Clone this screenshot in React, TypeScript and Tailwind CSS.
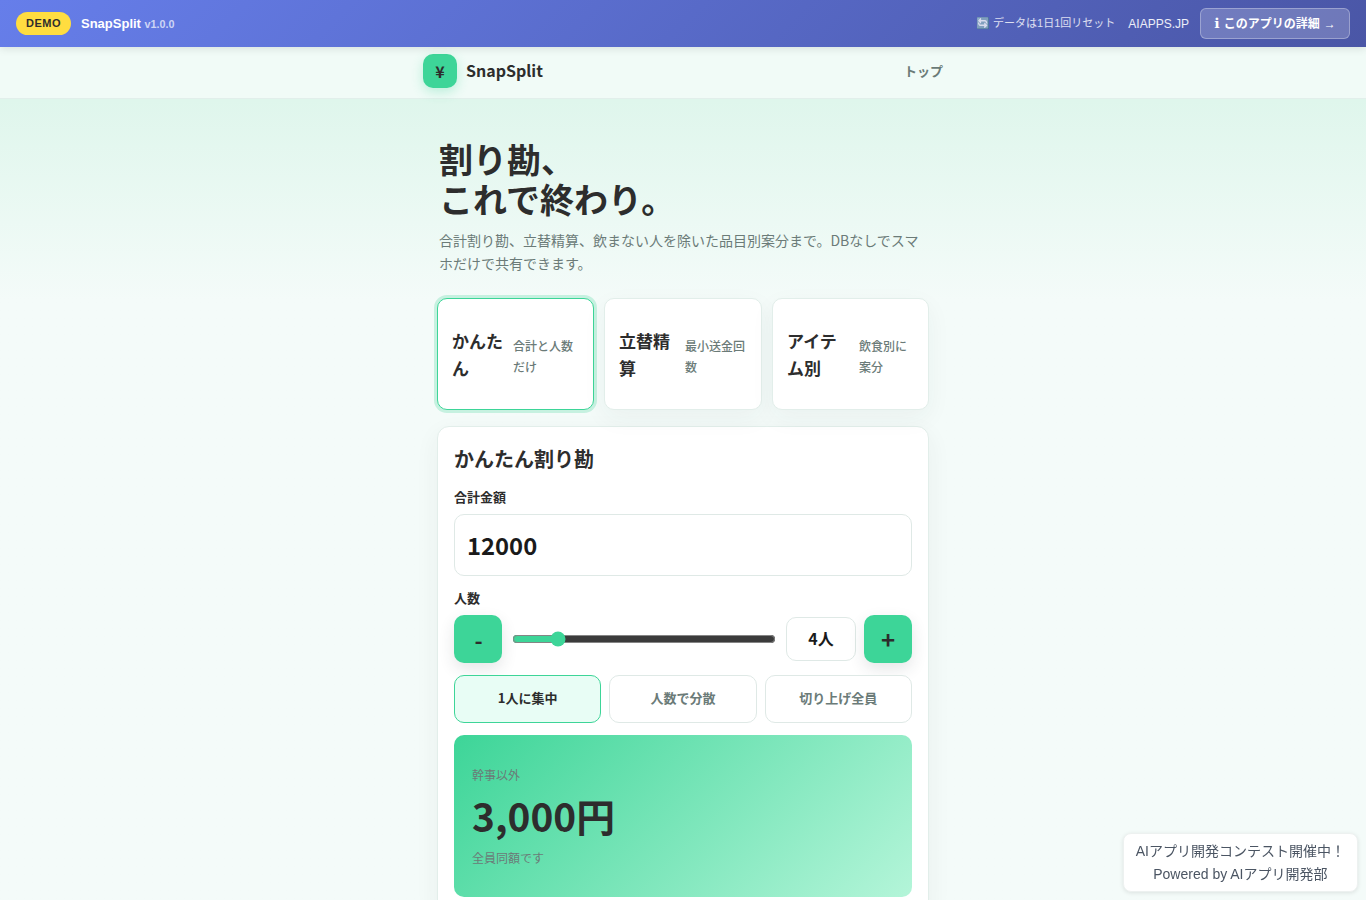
import React from "react";

const jp = "font-['Noto_Sans_CJK_JP','Noto_Sans',sans-serif]";

function Mode({ title, sub, active, titleW, subW }: { title: string; sub: string; active?: boolean; titleW: string; subW: string }) {
  return (
    <button
      className={`flex h-[112px] flex-1 items-center gap-[10px] rounded-[10px] border bg-white px-[14px] text-left ${
        active
          ? "border-[#3dd598] shadow-[0_0_0_3px_rgba(61,213,152,0.25)]"
          : "border-[#e2eeea] shadow-[0_8px_24px_rgba(45,52,54,0.05)]"
      }`}
    >
      <span className={`${titleW} shrink-0 text-[17px] leading-[27px] font-bold text-[#2d2d2d]`}>{title}</span>
      <span className={`${subW} mt-[4px] text-[12px] leading-[21px] font-medium text-[#6b7b78]`}>{sub}</span>
    </button>
  );
}

function Chip({ label, active }: { label: string; active?: boolean }) {
  return (
    <button
      className={`h-[48px] flex-1 rounded-[10px] border pb-[2px] text-[13px] font-bold ${
        active ? "border-[#3dd598] bg-[#e8fdf5] text-[#2d2d2d]" : "border-[#dfe9e6] bg-white text-[#6b7b78]"
      }`}
    >
      {label}
    </button>
  );
}

export default function App() {
  return (
    <div className={`min-h-screen bg-gradient-to-b from-[#dff6ec] from-[100px] via-[#f4fbf9] via-[300px] to-[#f4fbf9] ${jp}`}>
      <header className="relative z-10 flex h-[47px] items-center justify-between bg-[linear-gradient(135deg,#667eea_0%,#4a56a6_100%)] pr-4 pl-4 font-['Liberation_Sans','Noto_Sans_CJK_JP',sans-serif] shadow-[0_2px_8px_rgba(0,0,0,0.1)]">
        <div className="flex items-center gap-[10px]">
          <span className="flex h-[23px] w-[55px] items-center justify-center rounded-full bg-[#ffdd40] text-[11px] font-bold tracking-[0.5px] text-[#2d2d2d]">DEMO</span>
          <span className="text-[13px] font-bold text-white">
            SnapSplit <span className="text-[10.8px] font-bold text-white/70">v1.0.0</span>
          </span>
        </div>
        <div className="flex items-center">
          <span className="text-[11px] text-white/80">🔄 データは1日1回リセット</span>
          <span className="ml-[13px] text-[12px] text-white/90">AIAPPS.JP</span>
          <button className="ml-[11px] flex h-[31px] w-[150px] items-center justify-center rounded-[6px] border border-white/30 bg-white/20 text-[12px] font-bold text-white">
            <span className="font-['DejaVu_Sans',sans-serif] text-[14px]">ℹ</span>
            <span className="ml-[4px]">このアプリの詳細</span>
            <span className="ml-[4px] font-normal">→</span>
          </button>
        </div>
      </header>

      <nav className="h-[52px] border-b border-[#e2efeb] bg-[#f1fbf7]">
        <div className="mx-auto flex h-[47px] w-[520px] items-center justify-between">
          <div className="flex items-center gap-[9px]">
            <span className="flex h-[34px] w-[34px] items-center justify-center rounded-[10px] bg-[#3dd598] text-[16px] font-bold text-[#2d2d2d] shadow-[0_4px_12px_rgba(61,213,152,0.3)]">¥</span>
            <span className="pb-[2px] text-[16px] font-bold text-[#2d2d2d]">SnapSplit</span>
          </div>
          <span className="text-[13px] font-bold text-[#6b7b78]">トップ</span>
        </div>
      </nav>

      <main className="mx-auto w-[492px] pt-[40px]">
        <section className="px-[2px]">
          <h1 className="text-[34px] leading-[40px] font-bold text-[#2d2d2d]">割り勘、<br />これで終わり。</h1>
          <p className="mt-[10px] text-[14px] leading-[23px] text-[#6b7b78]">合計割り勘、立替精算、飲まない人を除いた品目別案分まで。DBなしでスマホだけで共有できます。</p>
        </section>

        <div className="mt-[23px] flex gap-[10px]">
          <Mode title="かんたん" sub="合計と人数だけ" active titleW="w-[51px]" subW="w-[64px]" />
          <Mode title="立替精算" sub="最小送金回数" titleW="w-[56px]" subW="w-[62px]" />
          <Mode title="アイテム別" sub="飲食別に案分" titleW="w-[62px]" subW="w-[50px]" />
        </div>

        <section className="mt-[16px] rounded-[12px] border border-[#e2eeea] bg-white px-4 pt-[16px] pb-4 shadow-[0_8px_24px_rgba(45,52,54,0.06)]">
          <h2 className="text-[20px] leading-[32px] font-bold text-[#2d2d2d]">かんたん割り勘</h2>
          <label className="mt-[14px] block text-[13px] leading-[16px] font-bold text-[#2d2d2d]">合計金額</label>
          <input
            readOnly
            value="12000"
            className="mt-[9px] block h-[62px] w-full rounded-[10px] border border-[#dfe9e6] bg-white px-[12px] pb-[2px] text-[23.8px] font-bold text-[#1a1a1a] outline-none"
          />
          <label className="mt-[14px] block text-[13px] leading-[16px] font-bold text-[#2d2d2d]">人数</label>
          <div className="mt-[9px] flex items-center gap-[8px]">
            <button className="h-[48px] w-[48px] rounded-[10px] bg-[#3dd598] pl-[1px] text-[22px] font-bold text-[#2d2d2d] shadow-[0_6px_16px_rgba(45,52,54,0.12)]">-</button>
            <input type="range" min={2} max={15} defaultValue={4} className="mx-[2px] h-[10px] min-w-0 flex-1 accent-[#3dd598]" />
            <span className="flex h-[44px] w-[70px] items-center justify-center rounded-[10px] border border-[#dfe9e6] bg-white pb-[2px] text-[16px] font-bold text-[#1a1a1a]">4人</span>
            <button className="h-[48px] w-[48px] rounded-[10px] bg-[#3dd598] text-[24px] font-bold text-[#2d2d2d] shadow-[0_6px_16px_rgba(45,52,54,0.12)]">+</button>
          </div>
          <div className="mt-[12px] flex gap-[8px]">
            <Chip label="1人に集中" active />
            <Chip label="人数で分散" />
            <Chip label="切り上げ全員" />
          </div>
          <div className="mt-[12px] h-[162px] rounded-[10px] bg-[linear-gradient(135deg,#3dd598_0%,#b4f5d9_100%)] px-[18px] pt-[31px]">
            <p className="text-[12px] leading-[18px] text-[#6b7b78]">幹事以外</p>
            <p className="mt-[5px] text-[38.8px] leading-[52px] font-bold text-[#2d2d2d]">3,000円</p>
            <p className="mt-[8px] text-[12px] leading-[18px] text-[#6b7b78]">全員同額です</p>
          </div>
        </section>
      </main>

      <aside className="fixed right-[8px] bottom-[8px] z-20 rounded-[8px] border border-[#edf1f0] bg-white px-[12px] pt-[6px] pb-[5px] text-center font-['Liberation_Sans','Noto_Sans_CJK_JP',sans-serif] text-[14px] leading-[23px] text-[#4b5563] shadow-[0_1px_4px_rgba(0,0,0,0.1)]">
        AIアプリ開発コンテスト開催中！<br />Powered by AIアプリ開発部
      </aside>
    </div>
  );
}
